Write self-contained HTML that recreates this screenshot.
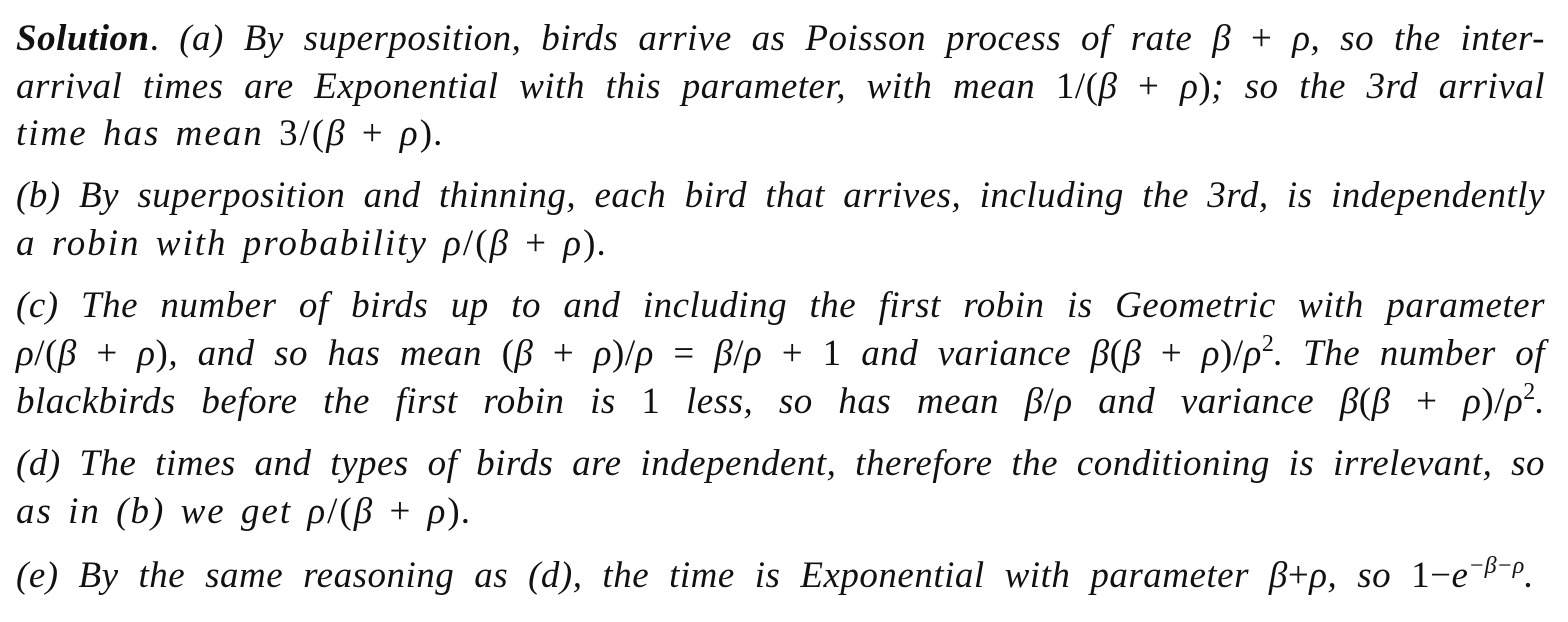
<!DOCTYPE html>
<html><head><meta charset="utf-8">
<style>
body{margin:0;background:#fff;width:1568px;height:622px;overflow:hidden;position:relative;}
.l{position:absolute;left:16px;width:1529px;font-family:"Liberation Serif",serif;font-style:italic;font-size:37px;line-height:47px;color:#111;white-space:nowrap;letter-spacing:2px;word-spacing:4px;}
.j{text-align:justify;text-align-last:justify;white-space:normal;letter-spacing:0.5px;word-spacing:0;}
.u{font-style:normal;}
b{font-weight:bold;}
sup{font-size:24px;line-height:0;vertical-align:14px;letter-spacing:0;}
</style></head><body>
<div class="l j" style="top:15px"><b>Solution</b><span class="u">.</span> (a) By superposition, birds arrive as Poisson process of rate β <span class="u">+</span> ρ, so the inter-</div>
<div class="l j" style="top:63px">arrival times are Exponential with this parameter, with mean <span class="u">1/(</span>β <span class="u">+</span> ρ<span class="u">)</span>; so the 3rd arrival</div>
<div class="l" style="top:110px">time has mean <span class="u">3/(</span>β <span class="u">+</span> ρ<span class="u">)</span>.</div>
<div class="l j" style="top:172px">(b) By superposition and thinning, each bird that arrives, including the 3rd, is independently</div>
<div class="l" style="top:220px">a robin with probability ρ<span class="u">/(</span>β <span class="u">+</span> ρ<span class="u">)</span>.</div>
<div class="l j" style="top:282px">(c) The number of birds up to and including the first robin is Geometric with parameter</div>
<div class="l j" style="top:330px">ρ<span class="u">/(</span>β <span class="u">+</span> ρ<span class="u">)</span>, and so has mean <span class="u">(</span>β <span class="u">+</span> ρ<span class="u">)/</span>ρ <span class="u">=</span> β<span class="u">/</span>ρ <span class="u">+ 1</span> and variance β<span class="u">(</span>β <span class="u">+</span> ρ<span class="u">)/</span>ρ<sup class="u">2</sup>. The number of</div>
<div class="l j" style="top:378px">blackbirds before the first robin is <span class="u">1</span> less, so has mean β<span class="u">/</span>ρ and variance β<span class="u">(</span>β <span class="u">+</span> ρ<span class="u">)/</span>ρ<sup class="u">2</sup>.</div>
<div class="l j" style="top:440px">(d) The times and types of birds are independent, therefore the conditioning is irrelevant, so</div>
<div class="l" style="top:488px">as in (b) we get ρ<span class="u">/(</span>β <span class="u">+</span> ρ<span class="u">)</span>.</div>
<div class="l j" style="top:552px;width:1518px">(e) By the same reasoning as (d), the time is Exponential with parameter β<span class="u">+</span>ρ, so <span class="u">1</span><span class="u">−</span>e<sup>−β−ρ</sup>.</div>
</body></html>
